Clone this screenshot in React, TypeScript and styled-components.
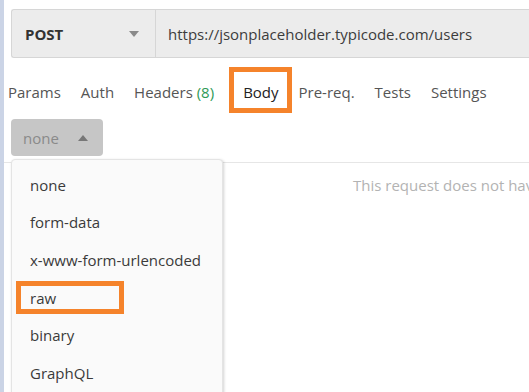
import styled, {createGlobalStyle} from "styled-components";

const GlobalStyle = createGlobalStyle`
    html, body {
        margin: 0;
        padding: 0;
        background: #ffffff;
        font-family: "Open Sans", "Liberation Sans", sans-serif;
        overflow: hidden;
    }
`;

const Page = styled.div`
    display: flex;
    width: 529px;
    height: 392px;
    overflow: hidden;
`;

const SideStrip = styled.div`
    width: 4px;
    flex-shrink: 0;
    background: #cbd4e6;
`;

const Main = styled.div`
    flex: 1;
    display: flex;
    flex-direction: column;
    position: relative;
    min-width: 0;
`;

const RequestBar = styled.div`
    display: flex;
    height: 49px;
    margin: 9px 0 0 7px;
    background: #ececec;
    border: 1px solid #d6d6d6;
    border-right: none;
    border-radius: 3px 0 0 3px;
    box-sizing: border-box;
`;

const MethodSelect = styled.div`
    width: 144px;
    display: flex;
    align-items: center;
    justify-content: space-between;
    padding: 0 16px 0 13px;
    box-sizing: border-box;
    border-right: 1px solid #d6d6d6;
    font-size: 15px;
    font-weight: 700;
    color: #333333;
`;

const Caret = styled.span<{ $up?: boolean }>`
    width: 0;
    height: 0;
    border-left: 5px solid transparent;
    border-right: 5px solid transparent;
    ${(props) => props.$up
        ? "border-bottom: 6px solid #777777;"
        : "border-top: 6px solid #8a8a8a;"}
`;

const UrlInput = styled.div`
    flex: 1;
    display: flex;
    align-items: center;
    padding-left: 12px;
    font-size: 15px;
    color: #3c3c3c;
    white-space: nowrap;
    overflow: hidden;
`;

const TabRow = styled.div`
    display: flex;
    margin-left: -6px;
`;

const Tab = styled.div<{ $active?: boolean }>`
    position: relative;
    padding: 24px 10px 7px;
    line-height: 20px;
    font-size: 15px;
    color: ${(props) => props.$active ? "#222222" : "#555555"};
    border-bottom: 4px solid ${(props) => props.$active ? "#e36f3e" : "transparent"};
    white-space: nowrap;
    ${(props) => props.$active && `
        margin-left: 9px;
        &::before {
            content: "";
            position: absolute;
            left: -4px;
            right: -3px;
            top: 9px;
            height: 36px;
            border: 5px solid #f5832b;
        }
    `}
`;

const Count = styled.span`
    color: #2f9a57;
`;

const BodyTypeButton = styled.div`
    width: 92px;
    height: 37px;
    margin: 6px 0 0 7px;
    display: flex;
    align-items: center;
    justify-content: space-between;
    padding: 0 15px 0 12px;
    box-sizing: border-box;
    background: #c6c6c6;
    border-radius: 4px;
    font-size: 15px;
    color: #8a8a8a;
`;

const BodyPanel = styled.div`
    margin-top: 6px;
    border-top: 1px solid #e6e6e6;
    padding: 12px 0 0 349px;
    font-size: 15px;
    color: #b3b3b3;
    white-space: nowrap;
    overflow: hidden;
`;

const Menu = styled.ul`
    position: absolute;
    top: 159px;
    left: 7px;
    width: 212px;
    margin: 0;
    padding: 6px 0 0;
    list-style: none;
    box-sizing: border-box;
    background: #fafafa;
    border: 1px solid #e4e4e4;
    border-radius: 4px;
    box-shadow: 1px 1px 3px rgba(0, 0, 0, 0.18);
    height: 260px;
`;

const MenuItem = styled.li<{ $marked?: boolean }>`
    position: relative;
    height: 37.6px;
    display: flex;
    align-items: center;
    padding-left: 18px;
    font-size: 15px;
    color: #3a3a3a;
    ${(props) => props.$marked && `
        &::before {
            content: "";
            position: absolute;
            left: 4px;
            top: 2px;
            width: 108px;
            height: 33px;
            box-sizing: border-box;
            border: 5px solid #f5832b;
        }
    `}
`;

const tabs = ["Params", "Auth", "Headers", "Body", "Pre-req.", "Tests", "Settings"];
const bodyTypes = ["none", "form-data", "x-www-form-urlencoded", "raw", "binary", "GraphQL"];

function App() {
    return (
        <>
            <GlobalStyle/>
            <Page>
                <SideStrip/>
                <Main>
                    <RequestBar>
                        <MethodSelect>
                            POST
                            <Caret/>
                        </MethodSelect>
                        <UrlInput>https://jsonplaceholder.typicode.com/users</UrlInput>
                    </RequestBar>
                    <TabRow>
                        {tabs.map((tab) => (
                            <Tab key={tab} $active={tab === "Body"}>
                                {tab}
                                {tab === "Headers" && <Count> (8)</Count>}
                            </Tab>
                        ))}
                    </TabRow>
                    <BodyTypeButton>
                        none
                        <Caret $up/>
                    </BodyTypeButton>
                    <BodyPanel>This request does not have a body</BodyPanel>
                    <Menu>
                        {bodyTypes.map((type) => (
                            <MenuItem key={type} $marked={type === "raw"}>{type}</MenuItem>
                        ))}
                    </Menu>
                </Main>
            </Page>
        </>
    );
}

export default App;
